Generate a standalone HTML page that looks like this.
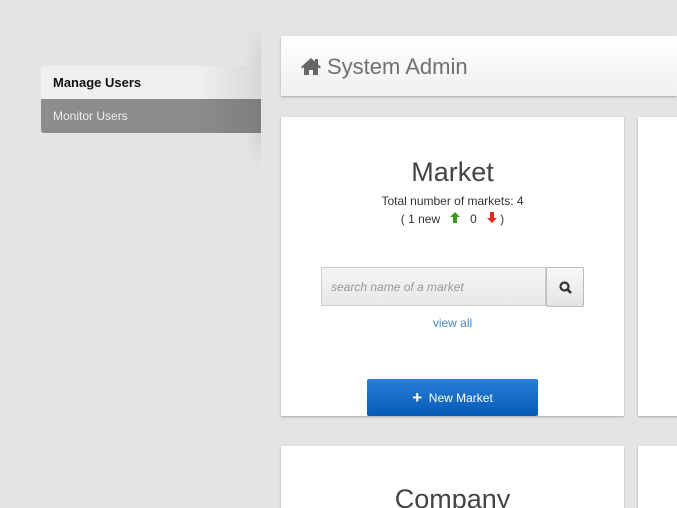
<html style="overflow:hidden"><head><style>
html,body{margin:0;width:677px;height:508px;overflow:hidden}
body{background:#e4e4e4;font-family:"Liberation Sans",sans-serif;position:relative}
.a{position:absolute}
.card{background:#fff;box-shadow:0 1px 2px rgba(0,0,0,.25)}
</style></head><body>
<div class="a" style="left:245px;top:25px;width:16px;height:145px;background:linear-gradient(90deg,rgba(0,0,0,0),rgba(0,0,0,.07));-webkit-mask:linear-gradient(transparent,#000 25%,#000 75%,transparent)"></div>
<div class="a" style="left:41px;top:66px;width:220px;height:33px;background:linear-gradient(90deg,#f0f0f0,#f0f0f0 70%,#d8d8d8);border-radius:3px 0 0 0;font-size:13px;font-weight:bold;line-height:33px;text-indent:12px;color:#111">Manage Users</div>
<div class="a" style="left:41px;top:99px;width:220px;height:34px;background:linear-gradient(90deg,#8c8c8c,#8c8c8c 70%,#7e7e7e);border-radius:0 0 0 3px;font-size:12px;line-height:34px;text-indent:12px;color:#eee">Monitor Users</div>
<div class="a card" style="left:281px;top:36px;width:396px;height:60px;background:linear-gradient(#fff,#f0f0f0)">
<svg class="a" style="left:20px;top:21px" width="20" height="18" viewBox="0 0 20 18"><path d="M10 1L0 10l1.5 1.5L3 10v8h5v-5h4v5h5v-8l1.5 1.5L20 10z" fill="#666"/><rect x="14" y="2" width="3" height="5" fill="#666"/></svg>
<div class="a" style="left:46px;top:18px;font-size:22px;color:#707070">System Admin</div></div>
<div class="a card" style="left:281px;top:117px;width:343px;height:299px">
<div class="a" style="left:0;width:343px;top:40px;text-align:center;font-size:27px;color:#444">Market</div>
<div class="a" style="left:0;width:343px;top:77px;text-align:center;font-size:12px;color:#333">Total number of markets: 4</div>
<div class="a" style="left:0;width:343px;top:95px;text-align:center;font-size:12px;color:#333">( 1 new &nbsp;&nbsp;<svg width="10" height="11" viewBox="0 0 10 11"><path d="M5 0L0 5h3v6h4V5h3z" fill="#3a9a1a"/></svg>&nbsp;&nbsp; 0 &nbsp;&nbsp;<svg width="10" height="11" viewBox="0 0 10 11"><path d="M5 11L0 6h3V0h4v6h3z" fill="#e02a1a"/></svg> )</div>
<div class="a" style="left:40px;top:150px;width:225px;height:39px;border:1px solid #ccc;background:linear-gradient(#f4f4f4,#e8e8e8);box-sizing:border-box;font-size:12px;font-style:italic;color:#999;line-height:38px;text-indent:9px">search name of a market</div>
<div class="a" style="left:265px;top:150px;width:38px;height:40px;border:1px solid #bbb;box-sizing:border-box;background:linear-gradient(#f8f8f8,#e4e4e4);border-radius:2px"><svg class="a" style="left:12px;top:13px" width="14" height="14"><circle cx="5.5" cy="5.5" r="4" stroke="#333" stroke-width="2.2" fill="none"/><path d="M8.5 8.5L12 12" stroke="#333" stroke-width="2.6"/></svg></div>
<div class="a" style="left:0;width:343px;top:199px;text-align:center;font-size:12px;color:#4a8ad0">view all</div>
<div class="a" style="left:86px;top:262px;width:171px;height:37px;background:linear-gradient(#2a7fd6,#045bb8);border-radius:2px;color:#fff;font-size:12px;line-height:37px;text-align:center"><b style="font-size:17px;vertical-align:-1px">+</b>&nbsp; New Market</div>
</div>
<div class="a card" style="left:638px;top:117px;width:60px;height:299px"></div>
<div class="a card" style="left:281px;top:446px;width:343px;height:80px"><div class="a" style="left:0;width:343px;top:38px;text-align:center;font-size:27px;color:#444">Company</div></div>
<div class="a card" style="left:638px;top:446px;width:60px;height:80px"></div>
</body></html>
